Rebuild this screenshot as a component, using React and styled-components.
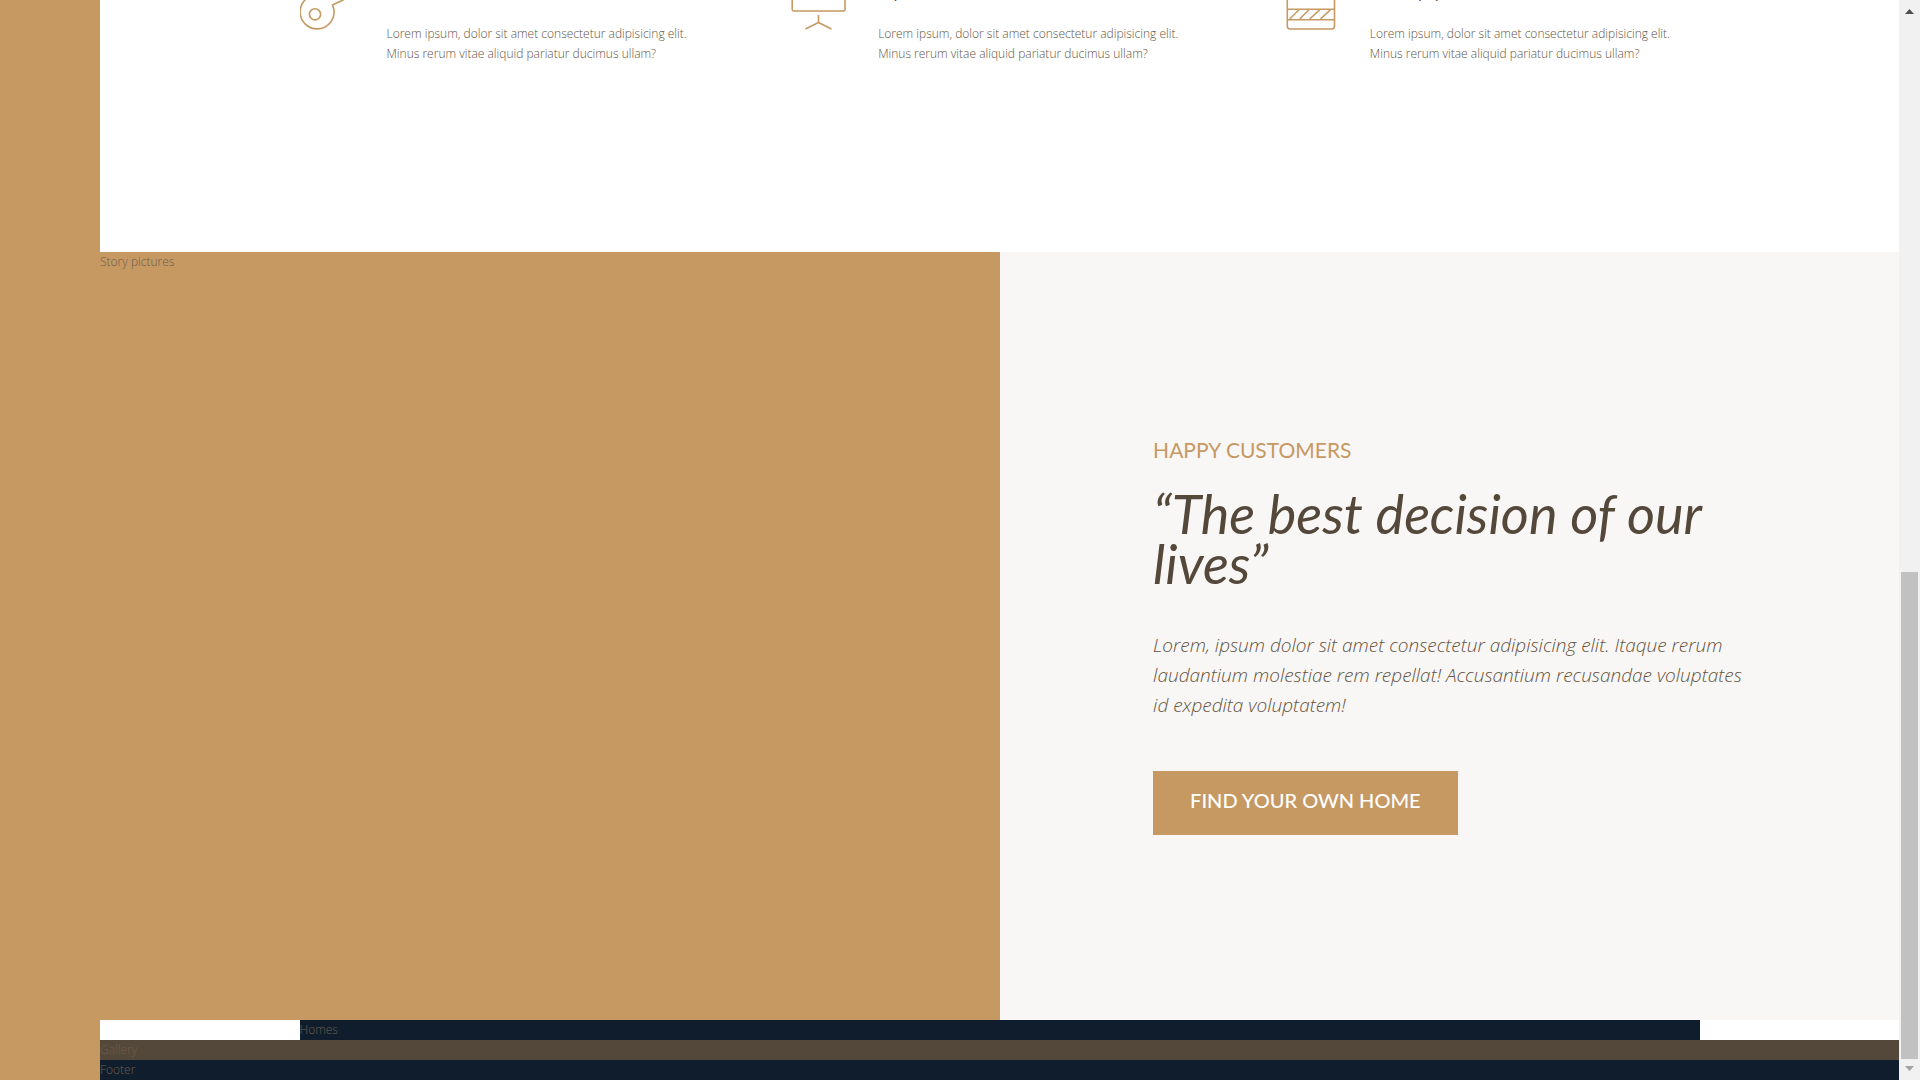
import React from "react";
import styled, { createGlobalStyle } from "styled-components";

const GlobalStyle = createGlobalStyle`
  *, *::before, *::after { box-sizing: border-box; margin: 0; padding: 0; }
  body {
    font-family: "Open Sans", "Noto Sans", sans-serif;
    font-size: 12px;
    font-weight: 300;
    line-height: 20px;
    color: #6d5d4b;
    background: #fff;
  }
`;

const Viewport = styled.div`
  display: flex;
  height: 100vh;
  overflow: hidden;
`;

const Sidebar = styled.aside`
  flex: 0 0 100px;
  background: #c69963;
`;

const Page = styled.main`
  flex: 1;
  min-width: 0;
  display: flex;
  flex-direction: column;
  justify-content: flex-end;
`;

const Features = styled.section`
  display: grid;
  grid-template-columns: repeat(3, 1fr);
  gap: 75px;
  width: 1400px;
  max-width: 100%;
  margin: 0 auto 188px;
`;

const Feature = styled.article`
  display: grid;
  grid-template-columns: 57px 1fr;
  column-gap: 30px;
`;

const FeatureIcon = styled.svg`
  width: 57px;
  height: 58px;
  fill: none;
  stroke: #c69963;
  stroke-width: 1.6;
`;

const FeatureTitle = styled.h4`
  font-family: Lato, sans-serif;
  font-size: 15px;
  font-weight: 400;
  line-height: 40px;
  color: #54483a;
  margin-bottom: 12px;
`;

const FeatureText = styled.p`
  color: #63543f;
`;

const Story = styled.section`
  display: grid;
  grid-template-columns: 1fr 1fr;
  min-height: 768px;
`;

const StoryPictures = styled.div`
  background: #c69963;
`;

const StoryContent = styled.div`
  display: flex;
  flex-direction: column;
  justify-content: center;
  align-items: flex-start;
  padding: 75px 8vw;
  background: #f9f7f6;
`;

const Eyebrow = styled.h3`
  font-family: Lato, sans-serif;
  font-size: 21px;
  font-weight: 400;
  line-height: 26px;
  text-transform: uppercase;
  color: #c69963;
  margin-bottom: 26px;
`;

const Quote = styled.h2`
  font-family: Lato, sans-serif;
  font-size: 54px;
  font-weight: 400;
  font-style: italic;
  line-height: 50px;
  color: #54483a;
  margin-bottom: 41px;
`;

const StoryText = styled.p`
  font-size: 19px;
  font-style: italic;
  line-height: 30px;
  color: #63543f;
  margin-bottom: 51px;
`;

const Button = styled.button`
  border: none;
  padding: 15px 37px 21px;
  font: 500 20px/28px Lato, sans-serif;
  text-transform: uppercase;
  color: #fff;
  background: #c69963;
  cursor: pointer;
`;

const Homes = styled.section`
  width: 1400px;
  max-width: 100%;
  margin: 0 auto;
  background: #101d2c;
`;

const Gallery = styled.section`
  background: #54483a;
`;

const Footer = styled.footer`
  background: #101d2c;
`;

const ScrollTrack = styled.div`
  flex: 0 0 21px;
  display: flex;
  flex-direction: column;
  align-items: center;
  background: #f1f1f1;
`;

const ScrollArrow = styled.svg`
  width: 21px;
  height: 21px;
  fill: ${(p) => p.$color};
`;

const ScrollThumb = styled.div`
  width: 17px;
  height: 487px;
  margin-top: auto;
  background: #c1c1c1;
`;

const items = [
  {
    title: "New home in one week",
    icon: (
      <>
        <path d="M56 15L53 18V21H48V25L43 28L32.500 33L34 38A17 17 0 1 1 19 23L45 3H56Z" />
        <circle cx="15" cy="42.300" r="5.600" />
      </>
    ),
  },
  {
    title: "Top 1% realtors",
    icon: (
      <>
        <path d="M1.200 4V37.500Q1.200 39 2.700 39H52.500Q54 39 54 37.500V4Z" />
        <path d="M27.500 43V50.500L14.500 57M27.500 50.500L40.500 57" />
      </>
    ),
  },
  {
    title: "Secure payments on nexter",
    icon: (
      <>
        <rect x="4.300" y="19" width="47.200" height="38" rx="3" />
        <path d="M4.300 37.200H51.500M4.300 47.700H51.500M6.700 47L16 37.800M16.700 47L26 37.800M26.700 47L36.700 37.800M37.400 47L47.400 37.800" />
      </>
    ),
  },
];

export default function App() {
  return (
    <>
      <GlobalStyle />
      <Viewport>
        <Sidebar />
        <Page>
          <Features>
            {items.map((item) => (
              <Feature key={item.title}>
                <FeatureIcon viewBox="0 0 57 58" aria-hidden="true">
                  {item.icon}
                </FeatureIcon>
                <div>
                  <FeatureTitle>{item.title}</FeatureTitle>
                  <FeatureText>
                    Lorem ipsum, dolor sit amet consectetur adipisicing elit.
                    <br />
                    Minus rerum vitae aliquid pariatur ducimus ullam?
                  </FeatureText>
                </div>
              </Feature>
            ))}
          </Features>
          <Story>
            <StoryPictures>Story pictures</StoryPictures>
            <StoryContent>
              <Eyebrow>Happy customers</Eyebrow>
              <Quote>“The best decision of our lives”</Quote>
              <StoryText>
                Lorem, ipsum dolor sit amet consectetur adipisicing elit. Itaque rerum laudantium
                molestiae rem repellat! Accusantium recusandae voluptates id expedita voluptatem!
              </StoryText>
              <Button type="button">Find your own home</Button>
            </StoryContent>
          </Story>
          <Homes>Homes</Homes>
          <Gallery>Gallery</Gallery>
          <Footer>Footer</Footer>
        </Page>
        <ScrollTrack>
          <ScrollArrow $color="#505050" viewBox="0 0 21 21" aria-hidden="true">
            <path d="M6 14L10.500 9L15 14Z" />
          </ScrollArrow>
          <ScrollThumb />
          <ScrollArrow $color="#a3a3a3" viewBox="0 0 21 21" aria-hidden="true">
            <path d="M6 7L10.500 12L15 7Z" />
          </ScrollArrow>
        </ScrollTrack>
      </Viewport>
    </>
  );
}
